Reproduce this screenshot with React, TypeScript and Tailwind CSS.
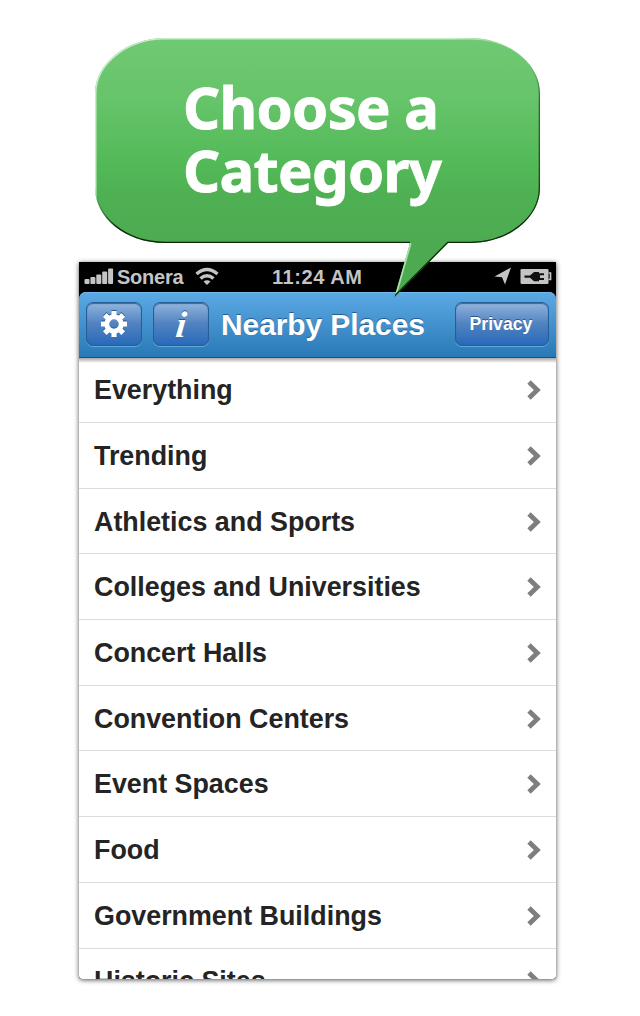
import React from "react";

const categories = [
  { name: "Everything" },
  { name: "Trending" },
  { name: "Athletics and Sports" },
  { name: "Colleges and Universities" },
  { name: "Concert Halls" },
  { name: "Convention Centers" },
  { name: "Event Spaces" },
  { name: "Food" },
  { name: "Government Buildings" },
  { name: "Historic Sites" },
];

const bubblePath =
  "M165 38H470C510 38 540 65 540 93V188C540 217 510 243 470 243H448L394.500 297L410 243H165C125 243 95 217 95 188V93C95 65 125 38 165 38Z";

function Bubble() {
  return (
    <div className="pointer-events-none absolute inset-0">
      <svg className="absolute inset-0" width="640" height="310" viewBox="0 0 640 310">
        <defs>
          <linearGradient id="green" gradientUnits="userSpaceOnUse" x1="0" y1="38" x2="0" y2="243">
            <stop offset="0" stopColor="#70c973" />
            <stop offset="0.3" stopColor="#66c46a" />
            <stop offset="0.62" stopColor="#53b957" />
            <stop offset="0.75" stopColor="#4fb153" />
            <stop offset="1" stopColor="#4daa50" />
          </linearGradient>
          <linearGradient id="shade" gradientUnits="userSpaceOnUse" x1="0" y1="60" x2="0" y2="225">
            <stop offset="0" stopColor="#0b280d" stopOpacity="0" />
            <stop offset="0.25" stopColor="#0b280d" stopOpacity="0.55" />
            <stop offset="0.7" stopColor="#0b280d" stopOpacity="0.75" />
            <stop offset="1" stopColor="#0b280d" stopOpacity="1" />
          </linearGradient>
          <linearGradient id="shadeLeft" gradientUnits="userSpaceOnUse" x1="96" y1="196" x2="120" y2="228">
            <stop offset="0" stopColor="#0b280d" stopOpacity="0" />
            <stop offset="1" stopColor="#0b280d" stopOpacity="1" />
          </linearGradient>
          <linearGradient id="glow" gradientUnits="userSpaceOnUse" x1="450" y1="0" x2="530" y2="0">
            <stop offset="0" stopColor="#c9edca" />
            <stop offset="1" stopColor="#c9edca" stopOpacity="0" />
          </linearGradient>
          <clipPath id="bubbleClip">
            <path d={bubblePath} />
          </clipPath>
          <filter id="soft" x="-5%" y="-5%" width="110%" height="110%">
            <feGaussianBlur stdDeviation="0.6" />
          </filter>
        </defs>
        <path d={bubblePath} fill="url(#green)" />
        <g clipPath="url(#bubbleClip)" fill="none">
          <g filter="url(#soft)">
            <path d="M95 200V93C95 65 125 38 165 38H470C500 38 518 50 529 64" stroke="url(#glow)" strokeWidth="3" />
            <path d="M410 243L394.500 297" stroke="#a9dfab" strokeWidth="3.400" />
            <path d="M530 64C537 74 540 84 540 93V188C540 217 510 243 470 243H448L394.500 297" stroke="url(#shade)" strokeWidth="2.600" />
            <path d="M410 243H165C125 243 95 217 95 188" stroke="url(#shadeLeft)" strokeWidth="2.600" />
          </g>
        </g>
      </svg>
      <div className="absolute top-[75px] left-[183px] font-['Noto_Sans'] text-[58px] leading-[63px] font-bold tracking-[-0.7px] whitespace-nowrap text-white [-webkit-text-stroke:0.8px_white]">
        Choose a<br />
        Category
      </div>
    </div>
  );
}

function StatusBar() {
  return (
    <div className="flex h-[30px] shrink-0 items-center bg-black text-[20px] leading-[30px] font-bold text-[#c4c4c4]">
      <svg className="ml-[5px] shrink-0" width="30" height="30" viewBox="0 0 30 30" fill="#c4c4c4">
        <rect x="0.500" y="17" width="5" height="5" rx="1" />
        <rect x="6.400" y="15" width="5" height="7" rx="1" />
        <rect x="12.300" y="12.500" width="5" height="9.500" rx="1" />
        <rect x="18.200" y="9.500" width="5" height="12.500" rx="1" />
        <rect x="24.100" y="6.500" width="5" height="15.500" rx="1" />
      </svg>
      <div className="ml-[3px] w-[66px] tracking-[-0.25px]">Sonera</div>
      <svg className="ml-[12px] shrink-0" width="24" height="30" viewBox="0 0 24 30" fill="none" stroke="#c4c4c4" strokeWidth="3.400">
        <path d="M1.500 12Q12 3 22.500 12" />
        <path d="M5.500 16.500Q12 10.800 18.500 16.500" />
        <path d="M8.500 19.500Q12 17 15.500 19.500L12 23Z" fill="#c4c4c4" stroke="none" />
      </svg>
      <div className="ml-[53px] w-[92px] tracking-[0.55px] whitespace-nowrap">11:24 AM</div>
      <svg className="ml-[130px] shrink-0" width="18" height="30" viewBox="0 0 18 30">
        <path d="M17 5.500L0.500 14.500L8 15.200L11 22.500Z" fill="#c4c4c4" />
      </svg>
      <svg className="ml-[8px] shrink-0" width="33" height="30" viewBox="0 0 33 30">
        <rect x="0.500" y="7" width="28" height="15" rx="1.200" fill="#c4c4c4" />
        <path d="M28.500 11H30.500V17.500H28.500" fill="none" stroke="#c4c4c4" strokeWidth="1.700" />
        <path d="M4.500 13.500H10L14 10H19V11.300H24V13.300H20V16H24V18H19V19.300H14L10 15.800H4.500Z" fill="#111" />
      </svg>
    </div>
  );
}

const buttonClass =
  "flex h-[44px] shrink-0 items-center justify-center rounded-[7px] border border-[#275e95] bg-linear-to-b from-[#91b4dc] via-[#5082c0] to-[#276ab8] shadow-[inset_0_1px_1px_#34679a,0_1px_0_#64a9dc]";

function Header() {
  return (
    <div className="flex h-[66px] shrink-0 rounded-t-[7px] border-b border-[#175486] bg-linear-to-b from-[#5caae5] to-[#2779b6] pt-[10px] text-white shadow-[inset_0_1px_0_#70b9ed]">
      <button className={buttonClass + " ml-[7px] w-[56px]"}>
        <svg width="28" height="28" viewBox="-14 -14 28 28" fill="#fff" style={{ filter: "drop-shadow(0 -1px 0 #285b91)" }}>
          {[0, 45, 90, 135].map((a) => (
            <path key={a} transform={"rotate(" + a + ")"} d="M-2.600 -13H2.600V-7H-2.600ZM-2.600 13H2.600V7H-2.600Z" />
          ))}
          <circle r="7.200" fill="none" stroke="#fff" strokeWidth="5" />
        </svg>
      </button>
      <button className={buttonClass + " ml-[11px] w-[56px]"}>
        <span className="translate-y-px -skew-x-6 font-['Liberation_Serif'] text-[37px] leading-[38px] font-bold italic [text-shadow:0_-1px_0_#285b91]">i</span>
      </button>
      <div className="ml-[12px] w-[206px] pt-px text-[30px] leading-[43px] font-bold tracking-[-0.1px] whitespace-nowrap [text-shadow:0_-1px_0_#285d8d]">
        Nearby Places
      </div>
      <button className={buttonClass + " ml-[28px] w-[94px] pr-[8px] pl-[6px] text-[17.700px] font-bold [text-shadow:0_-1px_0_#285b91]"}>Privacy</button>
    </div>
  );
}

export default function App() {
  return (
    <div className="relative h-[1016px] w-[640px] overflow-hidden bg-white pt-[262px] pl-[79px] font-['Liberation_Sans',sans-serif]">
      <div className="h-[717px] w-[477px] rounded-b-[4px] shadow-[0_1px_5px_#000000b0]">
        <div className="flex h-full flex-col overflow-hidden rounded-b-[3px] bg-black">
          <StatusBar />
          <Header />
          <div className="min-h-0 flex-1 overflow-hidden rounded-b-[3px] bg-linear-to-b from-[#a8a8a8] via-white via-[5px] to-white">
            {categories.map((item, index) => (
              <div
                key={item.name}
                className={
                  "flex items-center justify-between border-b-[1.500px] border-[#dcdcdc] px-[15px] " +
                  (index === 0 ? "h-[65px]" : "h-[65.700px] pt-px")
                }
              >
                <span className="text-[26.850px] leading-[32px] font-bold whitespace-nowrap text-[#242424]">{item.name}</span>
                <svg width="14" height="20" viewBox="0 0 14 20" fill="none" stroke="#7e7e7e" strokeWidth="4.800">
                  <path d="M2 2L10.300 10L2 18" />
                </svg>
              </div>
            ))}
          </div>
        </div>
      </div>
      <Bubble />
    </div>
  );
}
